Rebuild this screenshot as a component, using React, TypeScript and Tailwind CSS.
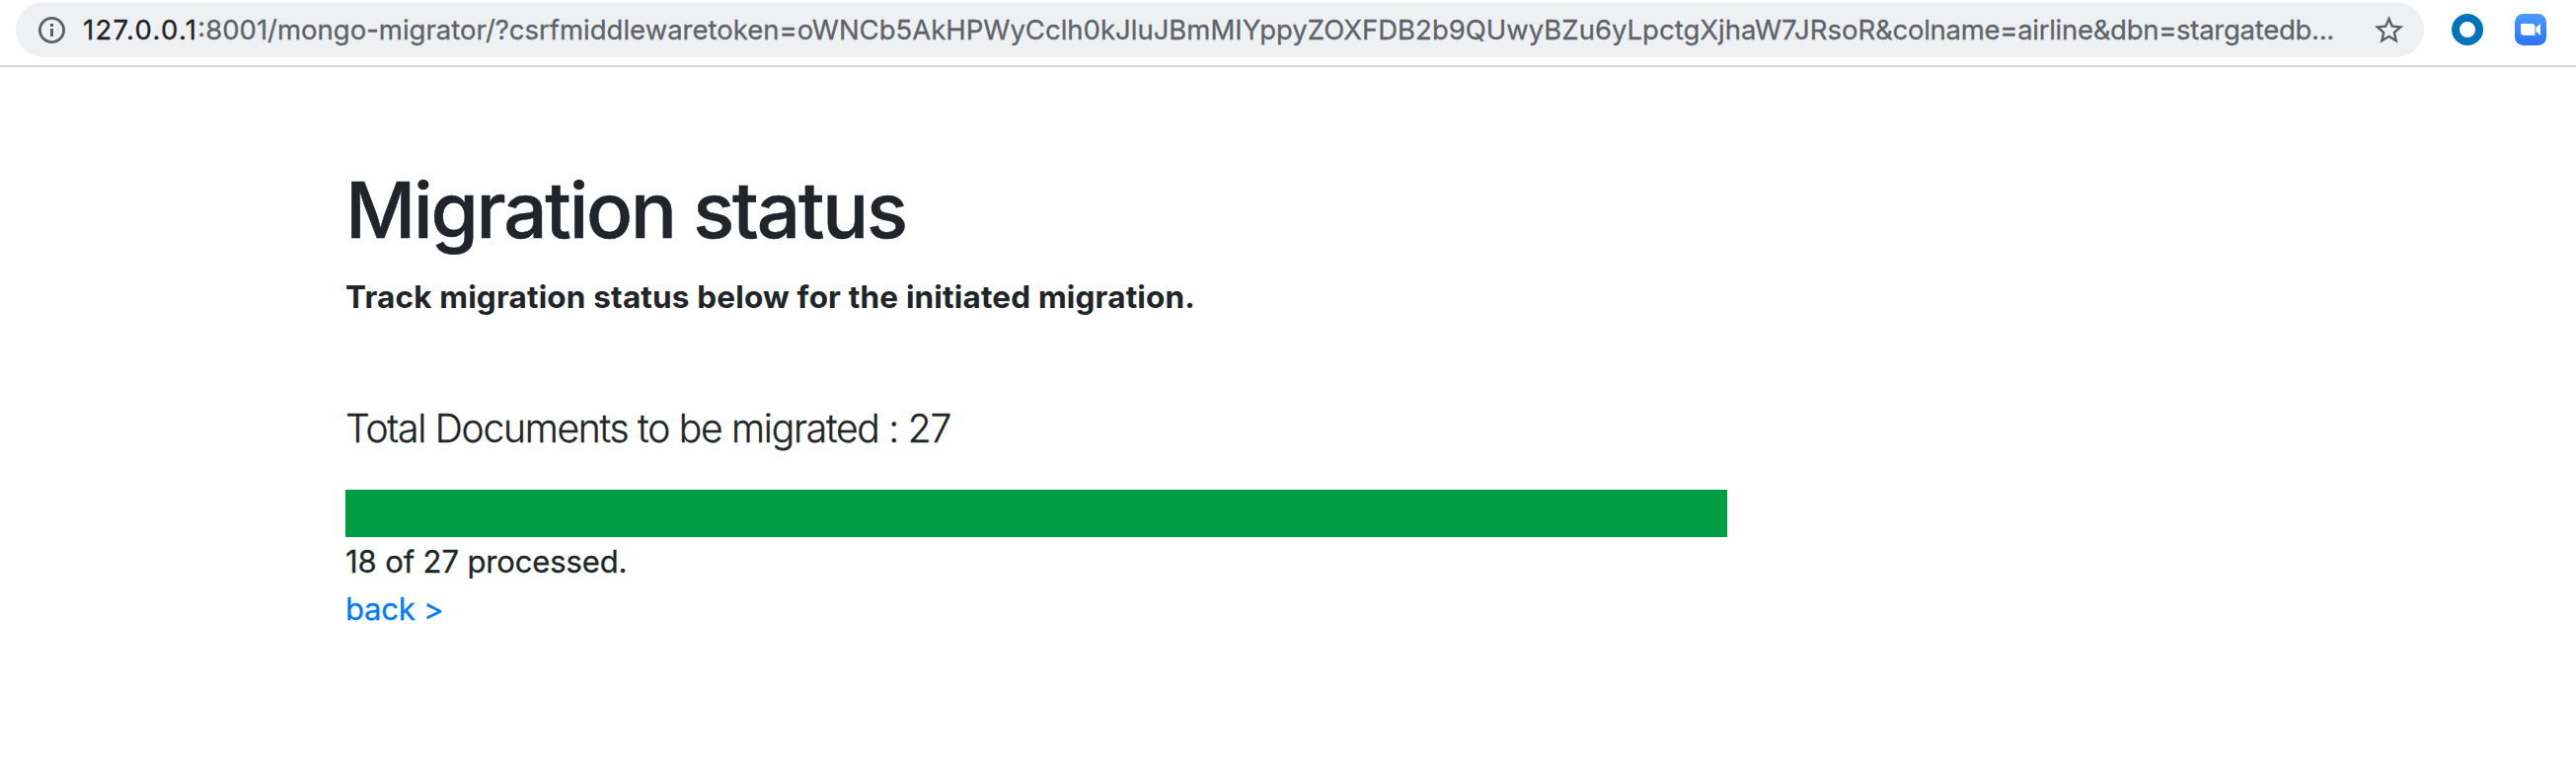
import React from "react";

const processed = 18;
const total = 27;

function InfoIcon() {
  return (
    <svg className="mt-px h-[27px] w-[27px] shrink-0" viewBox="0 0 27 27" fill="none">
      <circle cx="13.5" cy="13.5" r="12.1" stroke="#5c5f63" strokeWidth="2.8" />
      <rect x="12" y="7" width="3" height="3" fill="#5c5f63" />
      <rect x="12" y="12" width="3" height="8" fill="#5c5f63" />
    </svg>
  );
}

function StarIcon() {
  return (
    <svg className="h-[35px] w-[35px] shrink-0" viewBox="0 0 24 24" fill="#5c5f63">
      <path d="M22 9.24l-7.19-.62L12 2 9.19 8.63 2 9.24l5.46 4.73L5.82 21 12 17.27 18.18 21l-1.63-7.03L22 9.24zM12 15.4l-3.76 2.27 1-4.28-3.32-2.88 4.38-.38L12 6.1l1.71 4.04 4.38.38-3.32 2.88 1 4.28L12 15.4z" />
    </svg>
  );
}

function ZoomIcon() {
  return (
    <svg className="h-8 w-8 shrink-0" viewBox="0 0 32 32">
      <defs>
        <linearGradient id="cam" x1="0" y1="0" x2="0" y2="1">
          <stop offset="0" stopColor="#4a9bfd" />
          <stop offset="1" stopColor="#2d73f5" />
        </linearGradient>
      </defs>
      <rect width="32" height="32" rx="8.5" fill="url(#cam)" />
      <path d="M6.8 10.1H17.6a2.9 2.9 0 0 1 2.9 2.9V20.9a.8.8 0 0 1-.8.8H8.9A2.9 2.9 0 0 1 6 18.8V10.9a.8.8 0 0 1 .8-.8z" fill="#fff" />
      <path d="M21.4 14L25 10.5Q26 9.8 26 10.9V20.9Q26 22 25 21.3L21.4 17.8z" fill="#fff" />
    </svg>
  );
}

export default function App() {
  return (
    <div className="min-h-[788px] w-full bg-white font-['Inter','Liberation_Sans',sans-serif] text-[#212529]">
      <header className="flex h-[68px] items-start border-b-2 border-[#d6d6dc] pt-0.5 pl-4">
        <div className="flex h-14 w-[2440px] items-center rounded-full bg-[#eff0f2] pr-[18px] pl-[23px]">
          <InfoIcon />
          <div className="ml-[18px] flex-1 pt-px text-[27.5px] leading-[55px] whitespace-nowrap text-[#5f6368] [-webkit-text-stroke:0.3px]">
            <span className="tracking-[1.3px] text-[#202124]">127.0.0.1</span>
            :8001/mongo-migrator/?csrfmiddlewaretoken=oWNCb5AkHPWyCclh0kJluJBmMIYppyZOXFDB2b9QUwyBZu6yLpctgXjhaW7JRsoR
            <span className="tracking-[-0.28px]">&amp;colname=airline&amp;dbn=stargatedb...</span>
          </div>
          <StarIcon />
        </div>
        <div className="ml-7 flex h-14 items-center gap-8">
          <span className="h-8 w-8 rounded-full border-8 border-[#0073b9] bg-white" />
          <ZoomIcon />
        </div>
      </header>
      <main className="pt-[97px] pl-[350px]">
        <h1 className="text-[78px] leading-[96px] font-medium tracking-[-2.2px] [-webkit-text-stroke:0.5px]">
          Migration status
        </h1>
        <p className="mt-4 text-[31.5px] leading-[48px] font-bold tracking-[0.17px]">
          Track migration status below for the initiated migration.
        </p>
        <p className="mt-[79px] text-[39px] leading-[60px] font-light tracking-[-1.25px] [-webkit-text-stroke:0.3px]">
          Total Documents to be migrated : {total}
        </p>
        <div className="mt-8 h-12 w-[2100px]">
          <div className="h-full bg-[#009e44]" style={{ width: `${(processed / total) * 100}%` }} />
        </div>
        <p className="pt-px text-[31px] leading-[47px] tracking-[-0.12px] [-webkit-text-stroke:0.3px]">
          {processed} of {total} processed.
        </p>
        <a
          href="#"
          className="block w-fit pt-px text-[31px] leading-[47px] tracking-[-0.25px] text-[#007bff] [-webkit-text-stroke:0.3px]"
        >
          back &gt;
        </a>
      </main>
    </div>
  );
}
